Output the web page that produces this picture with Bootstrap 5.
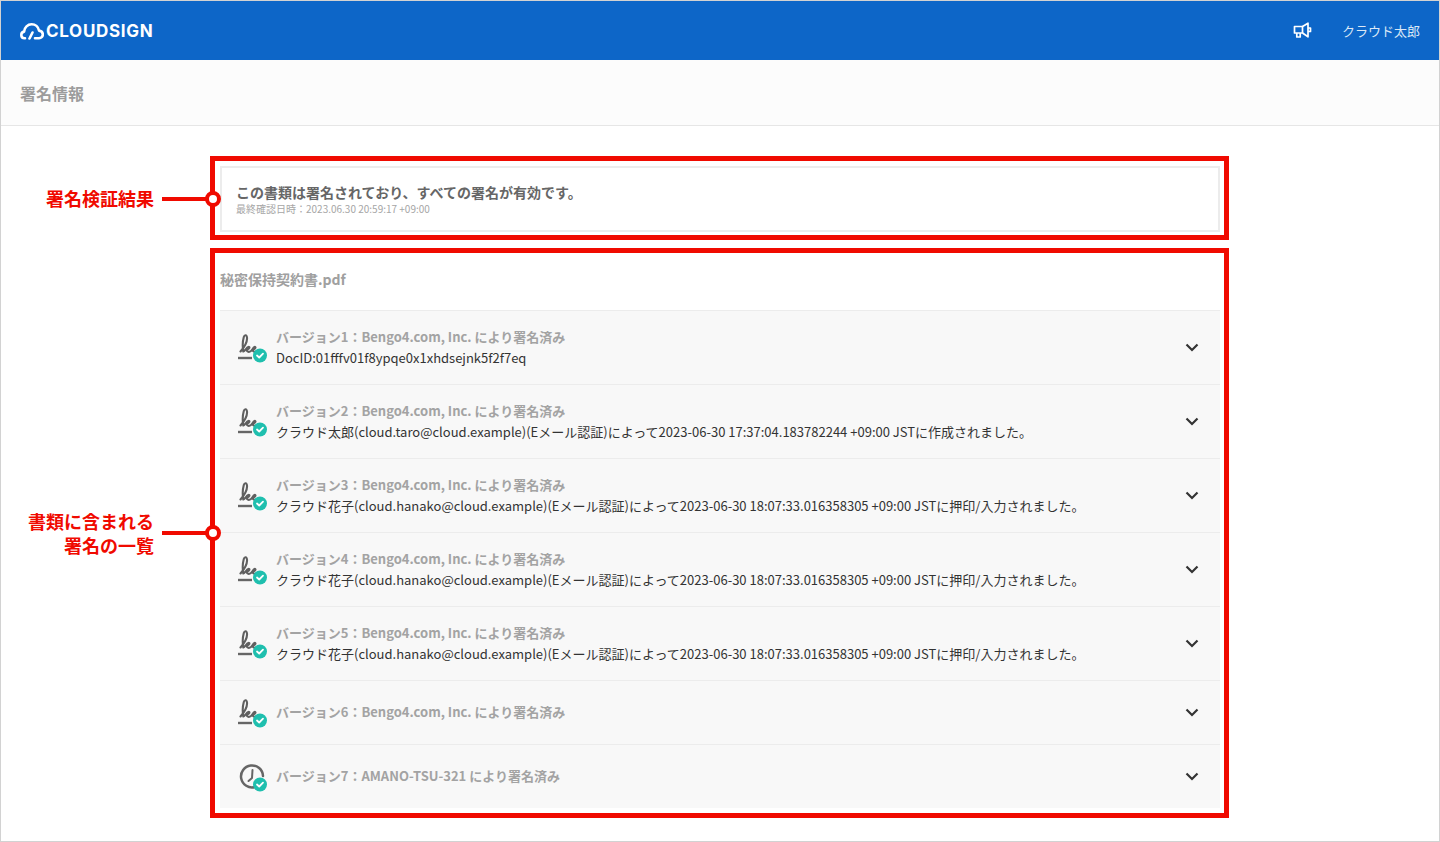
<!DOCTYPE html>
<html lang="ja">
<head>
<meta charset="utf-8">
<title>署名情報</title>
<link href="https://cdn.jsdelivr.net/npm/bootstrap@5.3.0/dist/css/bootstrap.min.css" rel="stylesheet">
<style>
html,body{height:100%;overflow:hidden}
body{font-family:"Noto Sans CJK JP","Noto Sans",sans-serif;background:#fff;color:#333}
.page-frame{height:842px;border:1px solid #d2d2d2;position:relative;overflow:hidden}
.top-bar{height:59px;background:#0d66c8;color:#fff;padding:0 19px}
.logo-mark{margin-top:2px}
.brand-word{font-family:Inter,Lato,sans-serif;font-weight:700;font-size:17px;letter-spacing:.7px;color:#fff;line-height:1;margin-left:2px;margin-top:2px}
.user-name{font-size:13px;color:#dbe8f6;margin-left:30px}
.sub-bar{height:66px;background:#fcfcfc;border-bottom:1px solid #e6e6e6;padding:0 19px;font-size:16px;font-weight:700;color:#9c9c9c}
.content-col{width:1000px;margin:40px auto 0;position:relative}
.status-box{height:66px;border:2px solid #ececec;padding:0 14px;justify-content:center}
.status-main{font-size:14px;font-weight:700;color:#666;line-height:20px;margin-top:-1px}
.status-sub{font-size:10px;color:#a6a6a6;line-height:13px}
.file-title{height:78px;padding-top:16px;font-size:14px;font-weight:700;color:#a0a0a0}
.sig-row{background:#f8f8f8;border-top:1px solid #ececec;padding:0 18px;height:74px}
.sig-row.slim{height:64px}
.sig-row.slim .sig-head{margin-top:-1px}
.sig-head{font-size:13px;font-weight:700;color:#a3a3a3;line-height:20px}
.sig-desc{font-size:13px;color:#333;line-height:20px;margin-top:1px}
.sig-icon{width:30px;height:32px;flex:none;margin-right:8px}
.chev{width:14px;height:9px;margin-right:3px;flex:none}
.red-frame{position:absolute;border:5px solid #f00a00;left:-10px;width:1019px;pointer-events:none}
.frame-a{top:-10px;height:84px}
.frame-b{top:82px;height:570px}
.note{position:absolute;right:1010px;display:flex;align-items:center;justify-content:flex-end;width:300px}
.note-label{color:#f00a00;font-size:18px;font-weight:700;line-height:24px;text-align:right;white-space:nowrap}
.note-a .note-label{margin-top:-2px}
.note-line{width:44px;height:3.5px;background:#f00a00;margin-left:8px}
.note-dot{width:16px;height:16px;border:4px solid #f00a00;border-radius:50%;background:#fff;margin-right:-11px;flex:none;margin-left:-1px}
.note-a{top:22px}
.note-b{top:343px}
</style>
</head>
<body>
<div class="page-frame">
  <header class="top-bar d-flex align-items-center justify-content-between">
    <div class="d-flex align-items-center">
      <svg class="logo-mark" width="24" height="17" viewBox="0 0 24 17" fill="none" stroke="#fff" stroke-width="2.600" stroke-linecap="round" stroke-linejoin="round" aria-hidden="true"><path d="M5 15.200H4.600C2.600 15.200 1.300 13.700 1.300 11.900 1.300 10.200 2.500 8.900 4.100 8.600 4.400 4.300 7.700 1.300 11.600 1.300 15.400 1.300 18.300 4 19 7.600 21.200 7.800 22.800 9.500 22.800 11.600 22.800 13.700 21.200 15.200 19.100 15.200H15"/><path d="M9.500 15.500 12.500 9.500"/></svg>
      <span class="brand-word">CLOUDSIGN</span>
    </div>
    <div class="d-flex align-items-center">
      <svg width="19" height="17" viewBox="0 0 19 17" fill="none" stroke="#fff" stroke-width="1.700" stroke-linejoin="round" aria-hidden="true"><path d="M1.500 4.500H9.500V11H1.500Z"/><path d="M9.500 4.500 15 1.200V14.800L9.500 11"/><path d="M15 6H17.500V9.500H15"/><path d="M3.800 11V15H7.200V11"/></svg>
      <span class="user-name">クラウド太郎</span>
    </div>
  </header>
  <div class="sub-bar d-flex align-items-center">署名情報</div>

  <main class="content-col">
    <div class="status-box d-flex flex-column">
      <div class="status-main">この書類は署名されており、すべての署名が有効です。</div>
      <div class="status-sub">最終確認日時：2023.06.30 20:59:17 +09:00</div>
    </div>
    <div class="file-title d-flex align-items-center">秘密保持契約書.pdf</div>

    <div class="sig-list">
      <div class="sig-row d-flex align-items-center">
        <svg class="sig-icon" viewBox="0 0 30 32" aria-hidden="true"><use href="#pen-mark"/></svg>
        <div class="flex-grow-1"><div class="sig-head">バージョン1：Bengo4.com, Inc. により署名済み</div><div class="sig-desc">DocID:01fffv01f8ypqe0x1xhdsejnk5f2f7eq</div></div>
        <svg class="chev" viewBox="0 0 14 9" aria-hidden="true"><use href="#chev-mark"/></svg>
      </div>
      <div class="sig-row d-flex align-items-center">
        <svg class="sig-icon" viewBox="0 0 30 32" aria-hidden="true"><use href="#pen-mark"/></svg>
        <div class="flex-grow-1"><div class="sig-head">バージョン2：Bengo4.com, Inc. により署名済み</div><div class="sig-desc">クラウド太郎(cloud.taro@cloud.example)(Eメール認証)によって2023-06-30 17:37:04.183782244 +09:00 JSTに作成されました。</div></div>
        <svg class="chev" viewBox="0 0 14 9" aria-hidden="true"><use href="#chev-mark"/></svg>
      </div>
      <div class="sig-row d-flex align-items-center">
        <svg class="sig-icon" viewBox="0 0 30 32" aria-hidden="true"><use href="#pen-mark"/></svg>
        <div class="flex-grow-1"><div class="sig-head">バージョン3：Bengo4.com, Inc. により署名済み</div><div class="sig-desc">クラウド花子(cloud.hanako@cloud.example)(Eメール認証)によって2023-06-30 18:07:33.016358305 +09:00 JSTに押印/入力されました。</div></div>
        <svg class="chev" viewBox="0 0 14 9" aria-hidden="true"><use href="#chev-mark"/></svg>
      </div>
      <div class="sig-row d-flex align-items-center">
        <svg class="sig-icon" viewBox="0 0 30 32" aria-hidden="true"><use href="#pen-mark"/></svg>
        <div class="flex-grow-1"><div class="sig-head">バージョン4：Bengo4.com, Inc. により署名済み</div><div class="sig-desc">クラウド花子(cloud.hanako@cloud.example)(Eメール認証)によって2023-06-30 18:07:33.016358305 +09:00 JSTに押印/入力されました。</div></div>
        <svg class="chev" viewBox="0 0 14 9" aria-hidden="true"><use href="#chev-mark"/></svg>
      </div>
      <div class="sig-row d-flex align-items-center">
        <svg class="sig-icon" viewBox="0 0 30 32" aria-hidden="true"><use href="#pen-mark"/></svg>
        <div class="flex-grow-1"><div class="sig-head">バージョン5：Bengo4.com, Inc. により署名済み</div><div class="sig-desc">クラウド花子(cloud.hanako@cloud.example)(Eメール認証)によって2023-06-30 18:07:33.016358305 +09:00 JSTに押印/入力されました。</div></div>
        <svg class="chev" viewBox="0 0 14 9" aria-hidden="true"><use href="#chev-mark"/></svg>
      </div>
      <div class="sig-row slim d-flex align-items-center">
        <svg class="sig-icon" viewBox="0 0 30 32" aria-hidden="true"><use href="#pen-mark"/></svg>
        <div class="flex-grow-1"><div class="sig-head">バージョン6：Bengo4.com, Inc. により署名済み</div></div>
        <svg class="chev" viewBox="0 0 14 9" aria-hidden="true"><use href="#chev-mark"/></svg>
      </div>
      <div class="sig-row slim d-flex align-items-center">
        <svg class="sig-icon" viewBox="0 0 30 32" aria-hidden="true"><use href="#clock-mark"/></svg>
        <div class="flex-grow-1"><div class="sig-head">バージョン7：AMANO-TSU-321 により署名済み</div></div>
        <svg class="chev" viewBox="0 0 14 9" aria-hidden="true"><use href="#chev-mark"/></svg>
      </div>
    </div>

    <div class="red-frame frame-a"></div>
    <div class="red-frame frame-b"></div>
    <div class="note note-a"><span class="note-label">署名検証結果</span><span class="note-line"></span><span class="note-dot"></span></div>
    <div class="note note-b"><span class="note-label">書類に含まれる<br>署名の一覧</span><span class="note-line"></span><span class="note-dot"></span></div>
  </main>
</div>

<svg width="0" height="0" class="position-absolute" aria-hidden="true">
  <defs>
    <g id="check-mark">
      <circle cx="22" cy="23.500" r="7" fill="#1fbfae"/>
      <path d="M19 23.500 21.200 25.500 25 21.700" fill="none" stroke="#fff" stroke-width="1.800" stroke-linecap="round" stroke-linejoin="round"/>
    </g>
    <g id="pen-mark">
      <path d="M0 26H14" stroke="#666" stroke-width="2.400" fill="none"/>
      <path d="M2.500 19.500C6 15.500 9.500 10 9 5.500 8.700 2.500 6.500 2.500 5.800 5 4.800 8.500 4.500 15 5.300 19.500 7 19 8.500 15.500 10.300 15 12 14.500 12 17 8.500 17.500 9 20 11 20.500 13 19 14.500 18 15 15.500 16.500 15 18 14.500 18 17 14.500 17.500 15 20 17 20.500 19 19" fill="none" stroke="#5f5f5f" stroke-width="2.100" stroke-linecap="round" stroke-linejoin="round"/>
      <use href="#check-mark"/>
    </g>
    <g id="clock-mark">
      <path d="M17 26A11 11 0 1 1 25 15" fill="none" stroke="#666" stroke-width="2.500" stroke-linecap="round"/>
      <path d="M14.500 9 14 17 10.500 20" fill="none" stroke="#666" stroke-width="2" stroke-linecap="round" stroke-linejoin="round"/>
      <use href="#check-mark"/>
    </g>
    <path id="chev-mark" d="M1.500 1.500 7 7 12.500 1.500" fill="none" stroke="#333" stroke-width="2.200"/>
  </defs>
</svg>
<script src="https://cdn.jsdelivr.net/npm/bootstrap@5.3.0/dist/js/bootstrap.bundle.min.js"></script>
</body>
</html>
